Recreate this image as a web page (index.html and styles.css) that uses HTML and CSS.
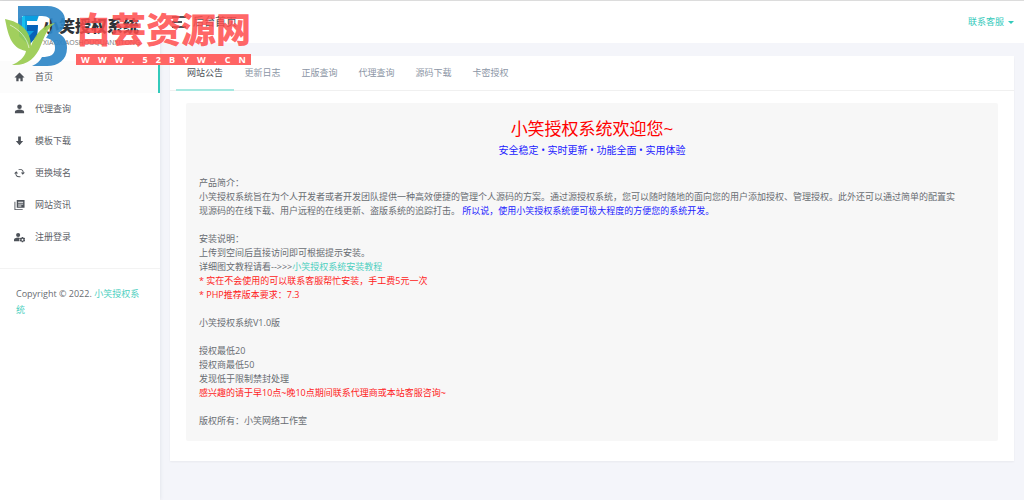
FILE: index.html
```html
<!DOCTYPE html>
<html lang="zh-CN">
<head>
<meta charset="utf-8">
<meta name="viewport" content="width=device-width, initial-scale=1">
<title>小笑授权系统</title>
<link rel="stylesheet" href="styles.css">
</head>
<body>
<div class="app">
  <aside class="sidebar">
    <a class="brand" href="#">
      <svg class="brand-mark" viewBox="0 0 22 32" aria-hidden="true">
        <path d="M1 5 7 1h14l-2 6H9v4h11l-1 11-8 9-10-9z" fill="#0b9fe0"/>
        <path d="M1 5 7 1v15l4 6v9L1 22z" fill="#16c0ee"/>
        <path d="M9 11h11l-1 11-8 9v-9l5-5H9z" fill="#0762b8"/>
        <path d="M9 7h9l-1 3H9z" fill="#fff"/>
      </svg>
      <span class="brand-text">
        <strong class="brand-name">小笑授权系统</strong>
        <small class="brand-sub">XIAOXIAOSHOUQUANXITONG</small>
      </span>
    </a>
    <nav class="menu">
      <a class="menu-item active" href="#"><svg class="icon" viewBox="0 0 24 24"><path d="M10 21v-6h4v6h5v-8h4L12 2 1 13h4v8z"/></svg>首页</a>
      <a class="menu-item" href="#"><svg class="icon" viewBox="0 0 24 24"><path d="M12 2a5 5 0 1 1 0 10 5 5 0 0 1 0-10zM2 21v-3c0-3 5-5 10-5s10 2 10 5v3z"/></svg>代理查询</a>
      <a class="menu-item" href="#"><svg class="icon" viewBox="0 0 24 24"><path d="M9 2h6v10h5l-8 9-8-9h5z"/></svg>模板下载</a>
      <a class="menu-item" href="#"><svg class="icon" viewBox="0 0 24 24"><path d="M10 3h3a8 8 0 0 1 8 8h3l-5 5-4-5h4a6 6 0 0 0-6-6h-3zM14 21h-3a8 8 0 0 1-8-8H0l5-5 4 5H5a6 6 0 0 0 6 6h3z"/></svg>更换域名</a>
      <a class="menu-item" href="#"><svg class="icon" viewBox="0 0 24 24"><path fill-rule="evenodd" d="M6 1h17v17H6zM9 5v2h11V5zm0 4v2h11V9zm0 4v2h7v-2zM1 5h2v16h16v2H1z"/></svg>网站资讯</a>
      <a class="menu-item" href="#"><svg class="icon" viewBox="0 0 24 24"><path fill-rule="evenodd" d="M9 3a4 4 0 1 1 0 9 4 4 0 0 1 0-9zM0 21v-3c0-3 4-5 9-5l4 1a8 8 0 0 0-1 7zM17 12h3l1 2 2-.500 1.500 2.500-1.500 1.500 1.500 2-1.500 2.500-2-.500-1 2h-3l-1-2-2 .500-1.500-2.500 1.500-2-1.500-1.500 1.500-2.500 2 .500zM18.500 16a2 2 0 1 0 0 4 2 2 0 0 0 0-4z"/></svg>注册登录</a>
    </nav>
    <p class="copyright">Copyright © 2022. <a href="#">小笑授权系统</a></p>
  </aside>

  <div class="page">
    <header class="topbar">
      <div class="topbar-left">
        <button class="toggle" type="button" aria-label="菜单"><span></span><span></span><span></span></button>
        <span class="page-title">后台首页</span>
      </div>
      <button class="contact" type="button">联系客服<span class="caret"></span></button>
    </header>

    <main class="card">
      <nav class="tabs">
        <a class="tab active" href="#">网站公告</a>
        <a class="tab" href="#">更新日志</a>
        <a class="tab" href="#">正版查询</a>
        <a class="tab" href="#">代理查询</a>
        <a class="tab" href="#">源码下载</a>
        <a class="tab" href="#">卡密授权</a>
      </nav>
      <article class="notice">
        <h1 class="notice-title">小笑授权系统欢迎您~</h1>
        <p class="notice-lead">安全稳定 • 实时更新 • 功能全面 • 实用体验</p>
        <p>产品简介：<br>
        小笑授权系统旨在为个人开发者或者开发团队提供一种高效便捷的管理个人源码的方案。通过源授权系统，您可以随时随地的面向您的用户添加授权、管理授权。此外还可以通过简单的配置实<br>现源码的在线下载、用户远程的在线更新、盗版系统的追踪打击。 <span class="blue">所以说，使用小笑授权系统便可极大程度的方便您的系统开发。</span></p>
        <p>安装说明：<br>
        上传到空间后直接访问即可根据提示安装。<br>
        详细图文教程请看--&gt;&gt;&gt;<a href="#">小笑授权系统安装教程</a><br>
        <span class="red">* 实在不会使用的可以联系客服帮忙安装，手工费5元一次</span><br>
        <span class="red">* PHP推荐版本要求：7.3</span></p>
        <p>小笑授权系统V1.0版</p>
        <p>授权最低20<br>
        授权商最低50<br>
        发现低于限制禁封处理<br>
        <span class="red">感兴趣的请于早10点~晚10点期间联系代理商或本站客服咨询~</span></p>
        <p>版权所有：小笑网络工作室</p>
      </article>
    </main>
  </div>
</div>

<div class="watermark">
  <svg class="watermark-mark" viewBox="0 0 62 62" aria-hidden="true">
    <path d="M13 1h29c12 0 19 7 18 16 0 5-3 9-7 11 6 3 9 8 9 15 0 12-9 18-20 18H27c5-2 8-5 10-9 8 0 13-2 13-9 0-6-3-9-9-10l5-8c1-1 1-3 1-5 0-6-4-9-10-9H17v12l-4-3z" fill="#2f87c7"/>
    <path d="M0 14c16 3 26 12 26 27 4-12 12-21 24-23-8 6-10 12-14 22-5 13-14 21-29 20 7-3 13-8 14-14C5 43 3 28 0 14z" fill="#9acb50"/>
    <path d="M5 20c10 5 17 13 19 23" fill="none" stroke="#fff" stroke-opacity=".6"/>
  </svg>
  <div class="watermark-text">
    <span class="watermark-name">白芸资源网</span>
    <span class="watermark-url"><b>W</b><b>W</b><b>W</b><b>.</b><b>5</b><b>2</b><b>B</b><b>Y</b><b>W</b><b>.</b><b>C</b><b>N</b></span>
  </div>
</div>
</body>
</html>
```

FILE: styles.css
```css
* { box-sizing: border-box; }

body {
  margin: 0;
  background: #f4f5fa;
  color: #686c72;
  font: 9px/14px "Open Sans", "Noto Sans CJK SC", sans-serif;
}

a { color: #4dcfc0; text-decoration: none; }
p { margin: 0; }
button { border: 0; padding: 0; background: none; font: inherit; cursor: pointer; }

.app {
  display: flex;
  min-height: 100vh;
  border-top: 1px solid #dcdcdc;
}

/* Sidebar */
.sidebar {
  flex: 0 0 160px;
  background: #fff;
  box-shadow: 0 0 4px rgba(60, 70, 100, .12);
}

.brand {
  display: flex;
  gap: 3px;
  height: 60px;
  padding: 13px 0 0 18px;
}
.brand-mark { width: 22px; height: 32px; }
.brand-text { display: flex; flex-direction: column; color: #2e3338; }
.brand-name { font-size: 16px; line-height: 24px; font-weight: 900; }
.brand-sub { font-size: 7px; line-height: 10px; color: #777; }

.menu { padding-bottom: 15px; border-bottom: 1px solid #f3f3f3; }
.menu-item {
  display: flex;
  align-items: center;
  gap: 9px;
  height: 32px;
  padding-left: 14px;
  color: #5d6167;
  border-right: 2px solid transparent;
}
.menu-item.active { background: #fcfcfc; border-color: #33cabb; }
.icon { width: 12px; height: 12px; padding-right: 1px; fill: #4d5259; }

.copyright { padding: 17px 16px; line-height: 16px; }

/* Top bar */
.page { flex: 1; min-width: 0; }
.topbar {
  display: flex;
  align-items: center;
  justify-content: space-between;
  height: 42px;
  padding: 0 10px 0 12px;
  background: #fff;
}
.topbar-left { display: flex; align-items: center; gap: 7px; }
.toggle { display: flex; flex-direction: column; gap: 3px; width: 14px; }
.toggle span { height: 2px; background: #4d5259; }
.toggle span:nth-child(2) { width: 10px; }
.page-title { font-size: 11px; color: #4d5259; }
.contact { display: flex; align-items: center; gap: 4px; color: #33cabb; font-size: 9px; }
.caret { border: 3px solid transparent; border-top-color: #33cabb; border-bottom: 0; }

/* Content card */
.card {
  margin: 13px 10px 39px;
  padding-bottom: 20px;
  background: #fff;
  box-shadow: 0 1px 2px rgba(0, 0, 0, .05);
}
.tabs {
  display: flex;
  height: 35px;
  padding: 0 6px;
  border-bottom: 1px solid #f0f0f0;
}
.tab {
  flex: 0 0 57px;
  height: 35px;
  line-height: 34px;
  text-align: center;
  color: #8b95a5;
}
.tab.active {
  flex-basis: 58px;
  color: #4d5259;
  border-bottom: 2px solid #a5e8e0;
}

.notice {
  margin: 12px 16px 0;
  padding: 13px;
  border-radius: 2px;
  background: #f7f7f7;
}
.notice p + p { margin-top: 14px; }
.notice-title {
  margin: 0;
  font-size: 17px;
  line-height: 26px;
  font-weight: 400;
  text-align: center;
  color: #f00;
}
.notice .notice-lead {
  margin-bottom: 18px;
  font-size: 10px;
  line-height: 16px;
  text-align: center;
  color: #22f;
}
.blue { color: #22f; }
.red { color: #ff2222; }

/* Watermark laid over the corner of the page */
.watermark {
  position: absolute;
  top: 5px;
  left: 5px;
  display: flex;
  gap: 9px;
  pointer-events: none;
}
.watermark-mark { width: 62px; height: 62px; opacity: .92; }
.watermark-text { width: 175px; }
.watermark-name {
  display: block;
  height: 49px;
  font-size: 35px;
  line-height: 49px;
  font-weight: 900;
  white-space: nowrap;
  color: rgba(255, 75, 75, .86);
}
.watermark-url {
  display: flex;
  justify-content: space-between;
  padding: 0 5px;
  background: #ff6464;
  color: #fff;
  font-size: 9px;
  line-height: 11px;
}
```
